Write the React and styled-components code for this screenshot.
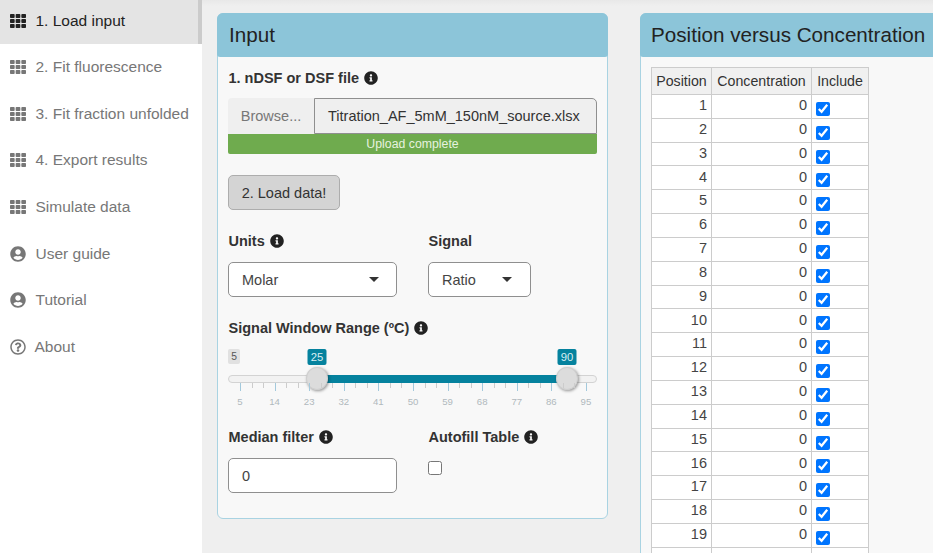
import React from "react";
import styled, { createGlobalStyle } from "styled-components";
import { FaTh, FaUserCircle, FaInfoCircle, FaRegQuestionCircle } from "react-icons/fa";

const GlobalStyle = createGlobalStyle`
  html, body {
    margin: 0;
    height: 100%;
    overflow: hidden;
    background: #efefef;
  }
  * { box-sizing: border-box; }
`;

const navItems = [
  { label: "1. Load input", icon: FaTh, active: true },
  { label: "2. Fit fluorescence", icon: FaTh },
  { label: "3. Fit fraction unfolded", icon: FaTh },
  { label: "4. Export results", icon: FaTh },
  { label: "Simulate data", icon: FaTh },
  { label: "User guide", icon: FaUserCircle },
  { label: "Tutorial", icon: FaUserCircle },
  { label: "About", icon: FaRegQuestionCircle, tight: true },
];

const tickLabels = [5, 14, 23, 32, 41, 50, 59, 68, 77, 86, 95];
const rows = Array.from({ length: 20 }, (_, i) => i + 1);

function Info() {
  return (
    <InfoIcon>
      <FaInfoCircle />
    </InfoIcon>
  );
}

export default function App() {
  return (
    <Page>
      <GlobalStyle />
      <Sidebar>
        {navItems.map((item) => (
          <NavItem key={item.label} $active={item.active} $tight={item.tight}>
            <item.icon />
            <span>{item.label}</span>
          </NavItem>
        ))}
      </Sidebar>
      <Main>
        <InputPanel>
          <PanelHeader>Input</PanelHeader>
          <PanelBody>
            <Label>
              1. nDSF or DSF file <Info />
            </Label>
            <FileRow>
              <Browse>Browse...</Browse>
              <FileName>Titration_AF_5mM_150nM_source.xlsx</FileName>
            </FileRow>
            <Progress>Upload complete</Progress>
            <LoadButton>2. Load data!</LoadButton>

            <Columns>
              <Field>
                <Label>
                  Units <Info />
                </Label>
                <Select $width={169} $caretRight={17}>Molar</Select>
              </Field>
              <Field>
                <Label>Signal</Label>
                <Select $width={103} $caretRight={18}>Ratio</Select>
              </Field>
            </Columns>

            <SliderLabel>
              Signal Window Range (ºC) <Info />
            </SliderLabel>
            <Slider>
              <MinTag>5</MinTag>
              <ValueTag style={{ left: 89 }}>25</ValueTag>
              <ValueTag style={{ left: 339 }}>90</ValueTag>
              <Track />
              <TrackFill style={{ left: 89, width: 250 }} />
              <Thumb style={{ left: 89 }} />
              <Thumb style={{ left: 339 }} />
              <Ticks>
                {tickLabels.map((t, i) => (
                  <TickSlot key={t}>
                    <MajorTick />
                    {i < tickLabels.length - 1 && (
                      <>
                        <MinorTick $offset={1 / 3} />
                        <MinorTick $offset={2 / 3} />
                      </>
                    )}
                    <TickText>{t}</TickText>
                  </TickSlot>
                ))}
              </Ticks>
            </Slider>

            <Columns $bottom>
              <Field>
                <Label>
                  Median filter <Info />
                </Label>
                <NumberBox>0</NumberBox>
              </Field>
              <Field>
                <Label>
                  Autofill Table <Info />
                </Label>
                <EmptyCheck />
              </Field>
            </Columns>
          </PanelBody>
        </InputPanel>

        <TablePanel>
          <PanelHeader>Position versus Concentration</PanelHeader>
          <TableBody>
            <Table>
              <thead>
                <tr>
                  <Th $width={60}>Position</Th>
                  <Th $width={100}>Concentration</Th>
                  <Th $width={57}>Include</Th>
                </tr>
              </thead>
              <tbody>
                {rows.map((r) => (
                  <tr key={r}>
                    <Td>{r}</Td>
                    <Td>0</Td>
                    <CheckCell>
                      <TableCheck type="checkbox" defaultChecked />
                    </CheckCell>
                  </tr>
                ))}
              </tbody>
            </Table>
          </TableBody>
        </TablePanel>
      </Main>
    </Page>
  );
}

const Page = styled.div`
  display: flex;
  height: 553px;
  overflow: hidden;
  font-family: "Liberation Sans", Arial, sans-serif;
  font-size: 14.5px;
  color: #333;
`;

const Sidebar = styled.nav`
  width: 202px;
  flex: none;
  background: #fff;
`;

const NavItem = styled.div`
  display: flex;
  align-items: center;
  height: ${(p) => (p.$active ? "44px" : "46.6px")};
  padding-left: 10px;
  gap: ${(p) => (p.$tight ? "8.5px" : "9.5px")};
  padding-bottom: ${(p) => (p.$active ? "3px" : "0")};
  background: ${(p) => (p.$active ? "#e4e4e4" : "transparent")};
  border-right: ${(p) => (p.$active ? "4px solid #cbcbcb" : "none")};
  color: ${(p) => (p.$active ? "#222" : "#777")};
  font-size: 15.5px;
  white-space: nowrap;

  svg {
    width: 16px;
    height: 16px;
    flex: none;
  }
`;

const Main = styled.main`
  flex: 1;
  min-width: 0;
  display: flex;
  align-items: flex-start;
  gap: 32px;
  padding: 13px 0 0 15px;
  background: linear-gradient(#e8e8e8, #efefef 6px);
`;

const Panel = styled.section`
  border: 1px solid #a9d3e2;
  border-radius: 6px;
  background: #f8f8f8;
`;

const PanelHeader = styled.h2`
  margin: -1px -1px 0;
  height: 44px;
  padding: 0 11px;
  display: flex;
  align-items: center;
  background: #8cc5d9;
  border-radius: 6px 6px 3px 3px;
  font-size: 20.65px;
  font-weight: 400;
  color: #222;
  white-space: nowrap;
`;

const InputPanel = styled(Panel)`
  width: 391px;
  height: 506px;
  flex: none;

  ${PanelHeader} {
    padding-left: 12px;
  }
`;

const TablePanel = styled(Panel)`
  width: 400px;
  height: 700px;
  flex: none;
`;

const PanelBody = styled.div`
  padding: 12px 10px 0;
`;

const Label = styled.div`
  display: flex;
  align-items: center;
  gap: 1px;
  height: 17px;
  padding-left: 0.5px;
  font-weight: 700;
  white-space: pre;
`;

const InfoIcon = styled.span`
  display: inline-flex;
  color: #222;

  svg {
    width: 14px;
    height: 14px;
  }
`;

const FileRow = styled.div`
  display: flex;
  height: 36px;
  margin-top: 12px;
`;

const Browse = styled.div`
  width: 86px;
  display: flex;
  align-items: center;
  justify-content: center;
  background: #efefef;
  border-radius: 4px 0 0 0;
  color: #777;
`;

const FileName = styled.div`
  flex: 1;
  display: flex;
  align-items: center;
  padding-left: 13px;
  background: #efefef;
  border: 1px solid #8f8f8f;
  border-radius: 0 5px 0 0;
  color: #333;
  white-space: nowrap;
`;

const Progress = styled.div`
  height: 20px;
  display: flex;
  align-items: center;
  justify-content: center;
  background: #6fab4e;
  border-radius: 0 0 2px 2px;
  color: #e6f2df;
  font-size: 12.3px;
`;

const LoadButton = styled.button`
  display: block;
  width: 112px;
  height: 35px;
  margin-top: 21px;
  padding: 0;
  background: #d4d4d4;
  border: 1px solid #adadad;
  border-radius: 5px;
  color: #333;
  font: inherit;
`;

const Columns = styled.div`
  display: flex;
  gap: 31px;
  margin-top: ${(p) => (p.$bottom ? "0" : "22px")};
`;

const Field = styled.div`
  width: 169px;
  display: flex;
  flex-direction: column;
  gap: 13px;
`;

const Select = styled.div`
  position: relative;
  width: ${(p) => p.$width}px;
  height: 35px;
  display: flex;
  align-items: center;
  padding-left: 13px;
  background: #fff;
  border: 1px solid #8f8f8f;
  border-radius: 5px;
  color: #444;

  &::after {
    content: "";
    position: absolute;
    right: ${(p) => p.$caretRight}px;
    top: 14px;
    border-style: solid;
    border-width: 5px 5px 0;
    border-color: #333 transparent transparent;
  }
`;

const SliderLabel = styled(Label)`
  margin-top: 22px;
`;

const Slider = styled.div`
  position: relative;
  height: 80px;
  margin-top: 5px;
  margin-bottom: 7px;
`;

const MinTag = styled.span`
  position: absolute;
  left: 0;
  top: 8px;
  width: 12px;
  height: 15px;
  display: flex;
  align-items: center;
  justify-content: center;
  background: #e1e1e1;
  border-radius: 2px;
  color: #555;
  font-size: 10.3px;
`;

const ValueTag = styled.span`
  position: absolute;
  top: 8px;
  width: 19px;
  height: 16px;
  transform: translateX(-50%);
  display: flex;
  align-items: center;
  justify-content: center;
  background: #05829e;
  border-radius: 2px;
  color: #d9eef3;
  font-size: 11.3px;
`;

const Track = styled.div`
  position: absolute;
  left: 0;
  right: 0;
  top: 34px;
  height: 8px;
  background: #f2f2f2;
  border: 1px solid #d3d3d3;
  border-radius: 4px;
`;

const TrackFill = styled.div`
  position: absolute;
  top: 34px;
  height: 8px;
  background: #05829e;
`;

const Thumb = styled.div`
  position: absolute;
  top: 26px;
  width: 22px;
  height: 23px;
  transform: translateX(-50%);
  background: #dcdcdc;
  border: 1px solid #cfcfcf;
  border-radius: 50%;
  box-shadow: 1px 1px 3px rgba(0, 0, 0, 0.4);
`;

const Ticks = styled.div`
  position: absolute;
  left: 12px;
  right: 10px;
  top: 42px;
  display: flex;
  justify-content: space-between;
`;

const TickSlot = styled.div`
  position: relative;
  width: 1px;
  height: 26px;
`;

const MajorTick = styled.div`
  width: 1px;
  height: 8px;
  background: #a3c9dc;
`;

const MinorTick = styled.div`
  position: absolute;
  top: 0;
  left: calc(34.6px * ${(p) => p.$offset});
  width: 1px;
  height: 5px;
  background: #ccc;
`;

const TickText = styled.span`
  position: absolute;
  top: 13px;
  left: 0;
  transform: translateX(-50%);
  color: #b0b8bd;
  font-size: 9.6px;
`;

const NumberBox = styled.div`
  width: 169px;
  height: 35px;
  display: flex;
  align-items: center;
  padding-left: 13px;
  background: #fff;
  border: 1px solid #8f8f8f;
  border-radius: 5px;
  color: #444;
`;

const EmptyCheck = styled.div`
  width: 14px;
  height: 14px;
  margin-top: 3px;
  background: #fff;
  border: 1px solid #777;
  border-radius: 2.5px;
`;

const TableBody = styled.div`
  padding: 10px 10px 0;
`;

const Table = styled.table`
  border-collapse: collapse;
  table-layout: fixed;
  width: 218px;
  background: #fff;
`;

const Th = styled.th`
  width: ${(p) => p.$width}px;
  height: 27px;
  padding: 0;
  background: #f0f0f0;
  border: 1px solid #ccc;
  font-weight: 400;
  text-align: center;
  white-space: nowrap;
  font-size: 14.2px;
`;

const Td = styled.td`
  height: 23.83px;
  padding: 0 4px 2px;
  border: 1px solid #ccc;
  text-align: right;
  color: #444;
  line-height: 1;
`;

const CheckCell = styled.td`
  height: 23.83px;
  padding: 0 0 0 4px;
  border: 1px solid #ccc;
  line-height: 0;
`;

const TableCheck = styled.input`
  width: 14px;
  height: 14px;
  margin: 5px 0 0;
  accent-color: #0075ff;
`;
